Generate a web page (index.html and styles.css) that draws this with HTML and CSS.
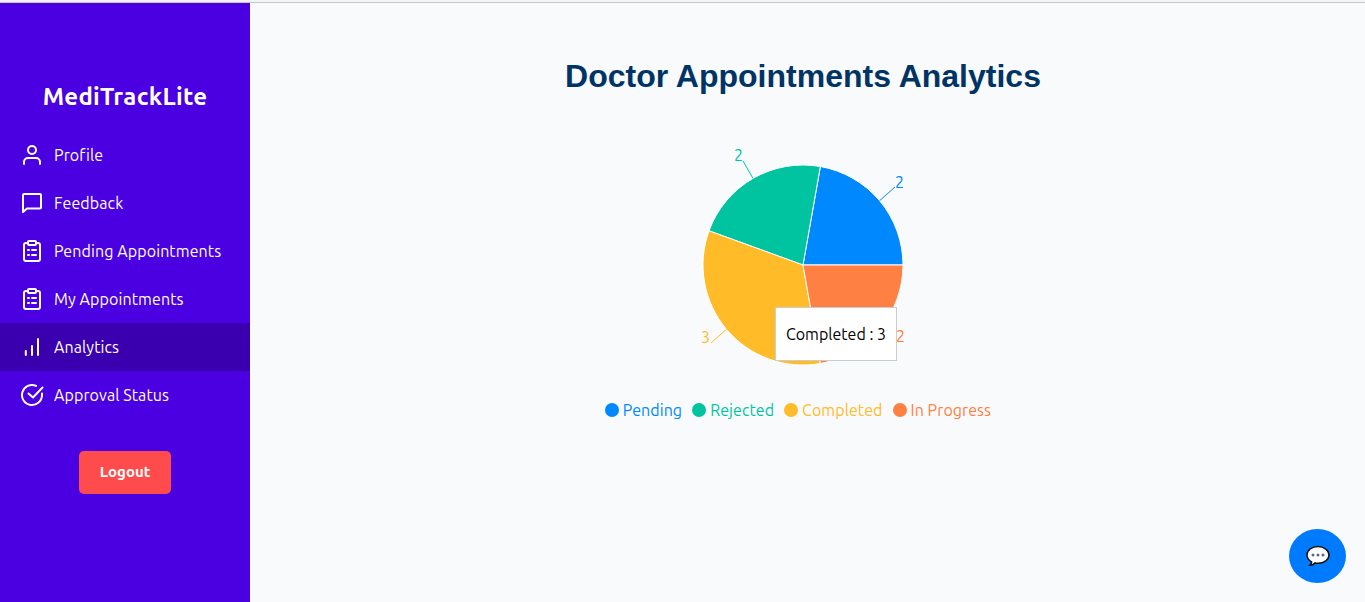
FILE: index.html
```html
<!DOCTYPE html>
<html lang="en">
<head>
    <meta charset="UTF-8">
    <meta name="viewport" content="width=device-width, initial-scale=1.0">
    <title>MediTrackLite - Analytics</title>
    <link rel="stylesheet" href="styles.css">
</head>
<body>
    <div class="topline"></div>
    <div class="layout">
        <aside class="sidebar">
            <h2 class="brand">MediTrackLite</h2>
            <nav class="nav">
                <a class="nav-item" href="#">
                    <svg class="nav-icon" viewBox="0 0 24 24"><circle cx="12" cy="7" r="4"/><path d="M4 21v-2a4 4 0 0 1 4-4h8a4 4 0 0 1 4 4v2"/></svg>
                    <span>Profile</span>
                </a>
                <a class="nav-item" href="#">
                    <svg class="nav-icon" viewBox="0 0 24 24"><path d="M3 4a1 1 0 0 1 1-1h16a1 1 0 0 1 1 1v12.500a1 1 0 0 1-1 1H7l-4 3.500z"/></svg>
                    <span>Feedback</span>
                </a>
                <a class="nav-item" href="#">
                    <svg class="nav-icon" viewBox="0 0 24 24"><path d="M8 4H6a2 2 0 0 0-2 2v14a2 2 0 0 0 2 2h12a2 2 0 0 0 2-2V6a2 2 0 0 0-2-2h-2"/><rect x="8" y="2" width="8" height="4" rx="1"/><path d="M8 11h1M12 11h4M8 16h1M12 16h4"/></svg>
                    <span>Pending Appointments</span>
                </a>
                <a class="nav-item" href="#">
                    <svg class="nav-icon" viewBox="0 0 24 24"><path d="M8 4H6a2 2 0 0 0-2 2v14a2 2 0 0 0 2 2h12a2 2 0 0 0 2-2V6a2 2 0 0 0-2-2h-2"/><rect x="8" y="2" width="8" height="4" rx="1"/><path d="M8 11h1M12 11h4M8 16h1M12 16h4"/></svg>
                    <span>My Appointments</span>
                </a>
                <a class="nav-item active" href="#">
                    <svg class="nav-icon" viewBox="0 0 24 24"><path d="M5.800 20v-4M12 20V11M18 20V4"/></svg>
                    <span>Analytics</span>
                </a>
                <a class="nav-item" href="#">
                    <svg class="nav-icon" viewBox="0 0 24 24"><path d="M22 10.500V12a10 10 0 1 1-5.900-9.100"/><path d="M8.500 10.500l4.500 4L22.500 4.500"/></svg>
                    <span>Approval Status</span>
                </a>
            </nav>
            <button class="logout" type="button">Logout</button>
        </aside>

        <main class="content">
            <h1 class="title">Doctor Appointments Analytics</h1>
            <div class="chart">
                <svg class="pie" width="300" height="280" viewBox="0 0 300 280">
                    <!-- centre 150,140 radius 100, slices go counter clockwise from 3 o'clock -->
                    <g stroke="#fff" stroke-width="1">
                        <path fill="#0088FE" d="M150 140L250 140A100 100 0 0 0 167.360 41.520Z"/>
                        <path fill="#00C49F" d="M150 140L167.360 41.520A100 100 0 0 0 56.030 105.800Z"/>
                        <path fill="#FFBB28" d="M150 140L56.030 105.800A100 100 0 0 0 167.360 238.480Z"/>
                        <path fill="#FF8042" d="M150 140L167.360 238.480A100 100 0 0 0 250 140Z"/>
                    </g>
                    <g fill="none">
                        <path stroke="#0088FE" d="M226.600 75.700L242 62"/>
                        <path stroke="#00C49F" d="M100 53.400L90 36"/>
                        <path stroke="#FFBB28" d="M73.400 204.300L58 218"/>
                    </g>
                    <g class="pie-label">
                        <text x="242" y="63" fill="#0088FE">2</text>
                        <text x="81" y="36" fill="#00C49F">2</text>
                        <text x="48" y="218" fill="#FFBB28">3</text>
                        <text x="243" y="217" fill="#FF8042">2</text>
                    </g>
                </svg>
                <div class="tooltip">Completed : 3</div>
            </div>
            <ul class="legend">
                <li class="legend-item pending"><i class="dot"></i>Pending</li>
                <li class="legend-item rejected"><i class="dot"></i>Rejected</li>
                <li class="legend-item completed"><i class="dot"></i>Completed</li>
                <li class="legend-item progress"><i class="dot"></i>In Progress</li>
            </ul>
        </main>
    </div>

    <button class="chat" type="button" aria-label="Chat">
        <svg width="26" height="26" viewBox="0 0 26 26">
            <path d="M13 3.500c-6 0-11 3.600-11 8.500 0 3 1.800 5.300 4.600 6.800-.2 1.300-.9 2.600-1.600 3.400 2 0 3.800-.9 5.200-2.300.9.200 1.800.300 2.800.300 6 0 11-3.700 11-8.200s-5-8.500-11-8.500z" fill="#fff" stroke="#111" stroke-width="1.500"/>
            <circle cx="8" cy="12" r="1.500" fill="#5b6b7a"/>
            <circle cx="13" cy="12" r="1.500" fill="#5b6b7a"/>
            <circle cx="18" cy="12" r="1.500" fill="#5b6b7a"/>
        </svg>
    </button>
</body>
</html>
```

FILE: styles.css
```css
html, body {
    height: 100%;
}
body {
    margin: 0;
    font-family: "Ubuntu", "Noto Sans", sans-serif;
    background-color: #f9fafc;
    display: flex;
    flex-direction: column;
    overflow: hidden;
}
.topline {
    height: 3px;
    flex-shrink: 0;
    box-sizing: border-box;
    background-color: #f4f4f4;
    border-bottom: 1px solid #c8c8c8;
}
.layout {
    display: flex;
    flex: 1;
    min-height: 0;
}
.sidebar {
    width: 250px;
    flex-shrink: 0;
    background-color: #4a00e0;
    color: #fff;
    display: flex;
    flex-direction: column;
    align-items: center;
    padding-top: 78px;
    box-sizing: border-box;
}
.brand {
    margin: 0 0 18px;
    font-size: 24px;
    line-height: 32px;
    font-weight: 700;
    letter-spacing: .3px;
}
.nav {
    width: 100%;
}
.nav-item {
    display: flex;
    align-items: center;
    gap: 10px;
    height: 48px;
    padding-left: 20px;
    color: #fff;
    text-decoration: none;
    font-size: 16px;
    letter-spacing: .1px;
}
.nav-item.active {
    background-color: #3a00b0;
}
.nav-icon {
    width: 24px;
    height: 24px;
    fill: none;
    stroke: #fff;
    stroke-width: 2;
    stroke-linecap: round;
    stroke-linejoin: round;
}
.logout {
    margin-top: 32px;
    width: 92px;
    height: 43px;
    padding: 0 0 2px;
    border: none;
    border-radius: 5px;
    background-color: #ff4b4b;
    color: #fff;
    font-family: inherit;
    font-size: 15px;
    font-weight: 700;
}
.content {
    flex: 1;
    padding: 51px 9px 0 0;
    display: flex;
    flex-direction: column;
    align-items: center;
}
.title {
    margin: 0;
    font-family: "Liberation Sans", Arial, sans-serif;
    font-size: 32px;
    line-height: 44px;
    font-weight: 700;
    color: #003366;
}
.chart {
    position: relative;
    width: 300px;
    height: 280px;
    margin-top: 27px;
}
.pie {
    display: block;
}
.pie-label {
    font-size: 16px;
}
.tooltip {
    position: absolute;
    left: 122px;
    top: 182px;
    width: 122px;
    height: 54px;
    box-sizing: border-box;
    background-color: #fff;
    border: 1px solid #ccc;
    font-size: 16px;
    line-height: 52px;
    text-align: center;
    color: #000;
}
.legend {
    list-style: none;
    margin: -7px 0 0;
    padding: 0 10px 0 0;
    display: flex;
    gap: 10px;
    font-size: 16px;
    line-height: 24px;
    letter-spacing: .07px;
}
.legend-item {
    display: flex;
    align-items: center;
    gap: 4px;
}
.dot {
    width: 14px;
    height: 14px;
    border-radius: 50%;
    background-color: currentColor;
}
.pending { color: #0088FE; }
.rejected { color: #00C49F; }
.completed { color: #FFBB28; }
.progress { color: #FF8042; }
.chat {
    position: fixed;
    right: 19px;
    bottom: 19px;
    width: 57px;
    height: 54px;
    padding: 0;
    border: none;
    border-radius: 50%;
    background-color: #007bff;
    display: flex;
    align-items: center;
    justify-content: center;
}
```
